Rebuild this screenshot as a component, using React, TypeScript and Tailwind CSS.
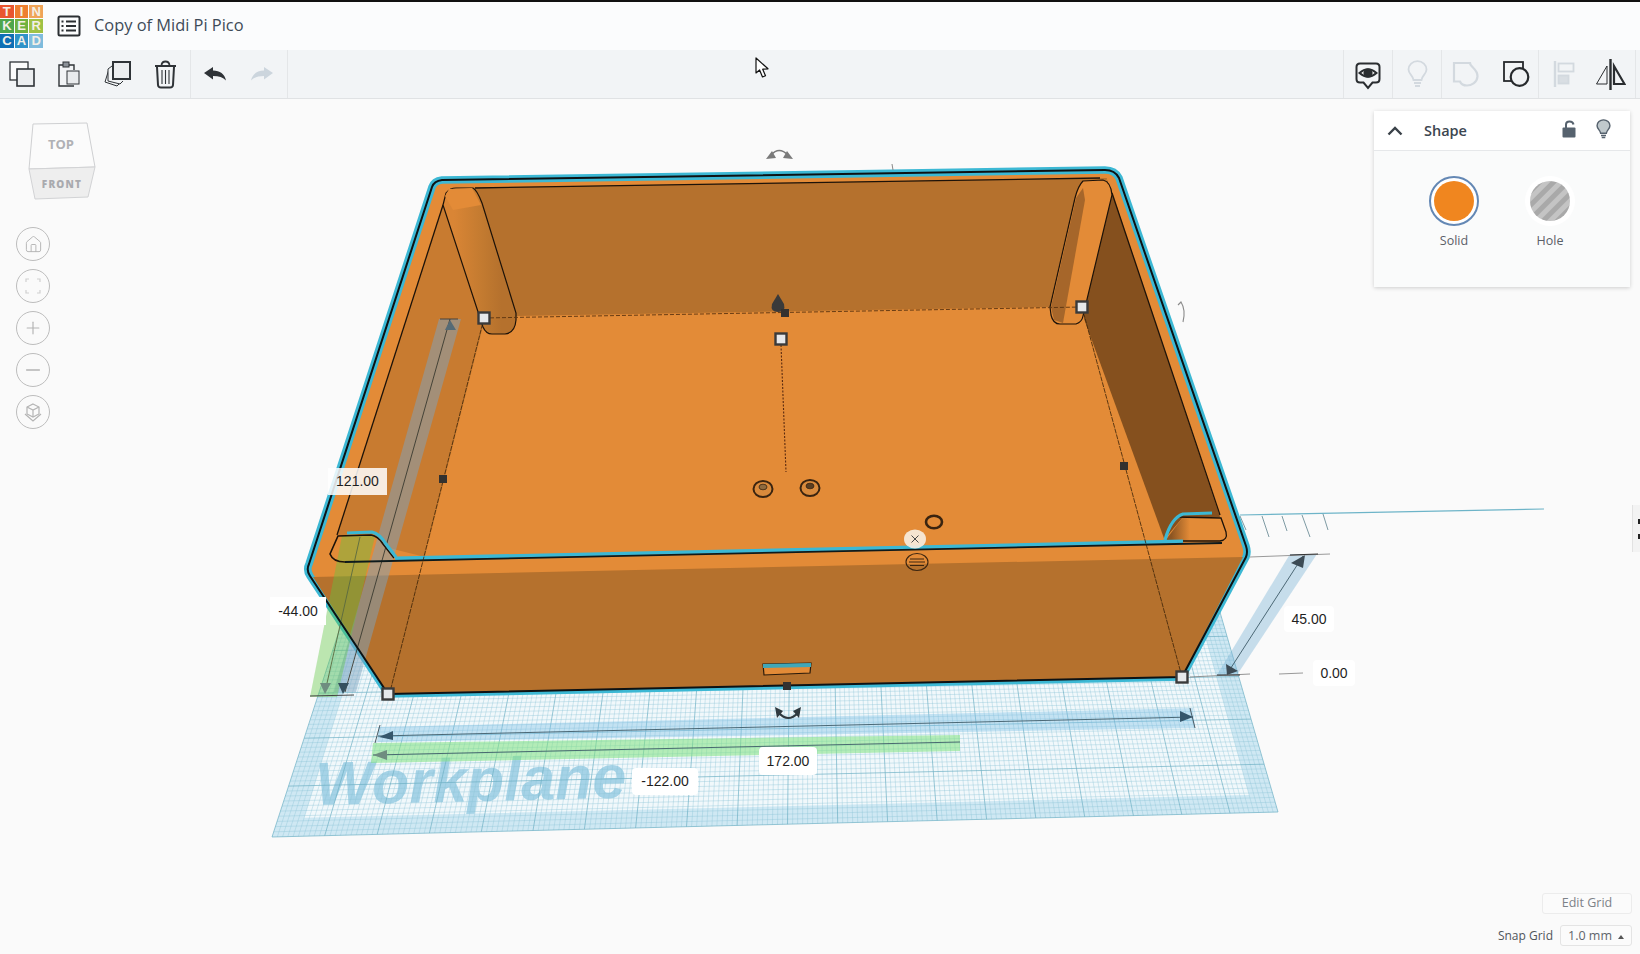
import { Home, Minus, Plus } from "lucide-react";

// workplane corners, bottom-left / bottom-right / top-right / top-left
const WP = { bl: [272, 837], br: [1278, 812], tr: [1186, 495], tl: [381, 502] };

function homography() {
  const [x0, y0] = WP.tl;
  const [x1, y1] = WP.tr;
  const [x2, y2] = WP.br;
  const [x3, y3] = WP.bl;
  const dx1 = x1 - x2, dx2 = x3 - x2, dx3 = x0 - x1 + x2 - x3;
  const dy1 = y1 - y2, dy2 = y3 - y2, dy3 = y0 - y1 + y2 - y3;
  const den = dx1 * dy2 - dx2 * dy1;
  const g = (dx3 * dy2 - dx2 * dy3) / den;
  const h = (dx1 * dy3 - dx3 * dy1) / den;
  const a = x1 - x0 + g * x1, b = x3 - x0 + h * x3, c = x0;
  const d = y1 - y0 + g * y1, e = y3 - y0 + h * y3, f = y0;
  return (u: number, v: number) => {
    const w = g * u + h * v + 1;
    return [(a * u + b * v + c) / w, (d * u + e * v + f) / w];
  };
}

const project = homography();
const pt = (u: number, v: number) => project(u, v).map((n) => n.toFixed(1)).join(",");

function gridPath(major: boolean) {
  let d = "";
  const cols = 200, rows = 80;
  for (let i = 0; i <= cols; i++) {
    const isMajor = i % 10 === 0;
    if (isMajor !== major) continue;
    d += `M${pt(i / cols, 0)}L${pt(i / cols, 1)}`;
  }
  for (let j = 0; j <= rows; j++) {
    const isMajor = j % 10 === 0;
    if (isMajor !== major) continue;
    d += `M${pt(0, j / rows)}L${pt(1, j / rows)}`;
  }
  return d;
}

const bandPath = `M${pt(0, 0)}L${pt(1, 0)}L${pt(1, 1)}L${pt(0, 1)}Z M${pt(0.025, 0)}L${pt(0.025, 0.955)}L${pt(0.975, 0.955)}L${pt(0.975, 0)}Z`;

const OUTLINE =
  "M442 180L1105 170Q1115 170 1119 178L1246 546Q1248 552 1246 557L1182 677L388 694L310 576Q306 570 309 564L432 187Q434 181 442 180Z";

function Handle({ x, y }: { x: number; y: number }) {
  return <rect x={x - 5.5} y={y - 5.5} width="11" height="11" fill="#e6e8ea" stroke="#3a3a3a" strokeWidth="2.4" />;
}

function Knob({ x, y }: { x: number; y: number }) {
  return <rect x={x - 4} y={y - 4} width="8" height="8" fill="#33312f" />;
}

function Scene() {
  return (
    <svg className="absolute inset-0" width="1640" height="855" viewBox="0 99 1640 855" fill="none">
      <defs>
        <linearGradient id="postL" x1="0" y1="0" x2="1" y2="0">
          <stop offset="0.15" stopColor="#d98535" />
          <stop offset="0.55" stopColor="#c27a30" />
          <stop offset="0.8" stopColor="#b5712d" />
        </linearGradient>
        <linearGradient id="postF" x1="0" y1="0" x2="1" y2="0">
          <stop offset="0.1" stopColor="#8c5522" />
          <stop offset="0.4" stopColor="#e38b37" />
        </linearGradient>
      </defs>

      {/* workplane */}
      <path d={`M${pt(0, 0)}L${pt(1, 0)}L${pt(1, 1)}L${pt(0, 1)}Z`} fill="#f1f8fb" />
      <path d={bandPath} fill="#cfe8f3" fillRule="evenodd" />
      <text
        x="0"
        y="0"
        transform="translate(316 805) rotate(-1.4)"
        fontFamily="'Liberation Sans', sans-serif"
        fontWeight="700"
        fontStyle="italic"
        fontSize="61"
        fill="#a6d3e7"
      >
        Workplane
      </text>
      <path d={gridPath(false)} stroke="#8cc3d6" strokeWidth="0.5" opacity="0.75" />
      <path d={gridPath(true)} stroke="#6fb0c4" strokeWidth="0.7" />

      {/* ruler on the right */}
      <path d="M1240 515L1544 509" stroke="#6db4c8" strokeWidth="1.2" />
      <path d="M1240 516L1246 530M1262 516L1269 537M1282 516L1287 531M1302 515L1310 537M1323 514L1328 530" stroke="#6f8f99" strokeWidth="0.9" />

      {/* measure bars under the box */}
      <polygon points="378,727 1193,708 1195,728 378,742" fill="#79bde6" fillOpacity="0.38" />
      <polygon points="373,743 960,735 960,751 371,763" fill="#7fe27f" fillOpacity="0.55" />
      <polygon points="1217,675 1237,675 1317,554 1290,554" fill="#7fb5d6" fillOpacity="0.42" />
      <path d="M378 736L1193 717M373 755L960 742" stroke="#3d5a68" strokeWidth="0.9" />
      <path d="M380 725L375 743M1190 708L1195 728" stroke="#3b4a52" strokeWidth="0.9" />
      <polygon points="379,737 393,731 393,740" fill="#35566b" />
      <polygon points="373,755 387,750 387,760" fill="#6f8d80" />
      <polygon points="1193,717 1180,711 1180,722" fill="#35566b" />
      <path d="M1227 674L1303 556" stroke="#3d5a68" strokeWidth="0.9" />
      <polygon points="1305,555 1291,563 1303,568" fill="#3c4b55" />
      <polygon points="1227,675 1226,664 1238,671" fill="#3c4b55" />
      <path d="M1250 557L1330 554" stroke="#999" strokeWidth="1" />
      <path d="M1290 555L1318 554" stroke="#333" strokeWidth="1" />
      <path d="M1190 677L1250 674" stroke="#888" strokeWidth="0.9" />
      <path d="M1217 675L1240 675" stroke="#333" strokeWidth="1" />
      <path d="M1279 674L1303 673" stroke="#999" strokeWidth="1" />

      {/* box body */}
      <path d={OUTLINE} fill="#e38b37" stroke="#3cb8d4" strokeWidth="7.5" strokeLinejoin="round" />
      {/* front wall */}
      <polygon points="313,577 1243,557 1182,677 388,694" fill="#b5712d" />

      {/* inner walls and floor */}
      <polygon points="450,188 1107,178 1082,322 480,327" fill="#b5712d" />
      <polygon points="443,205 483,327 425,557 337,535" fill="#c87b30" />
      <polygon points="1107,180 1112,192 1220,517 1183,517 1163,541 1083,322" fill="#85501e" />
      <polygon points="517,316 1050,307 1083,316 1165,541 425,557 483,327" fill="#e38b37" />

      {/* lines of the rim */}
      <path d="M475 188L1100 178" stroke="#1c1209" strokeWidth="1.3" />
      <path d="M443 205L337 535" stroke="#1c1209" strokeWidth="1.3" />
      <path d="M1112 193L1220 515" stroke="#1c1209" strokeWidth="1.3" />

      {/* back corner posts */}
      <path
        d="M443 205L446 193Q450 188 456 188L473 188Q477 190 482 203L516 313L516 320Q515 333 505 334L492 334Q486 334 483 327Z"
        fill="url(#postL)"
        stroke="#1c1209"
        strokeWidth="1.2"
      />
      <polygon points="445,196 449,189 472,188 481,205 453,210" fill="#e38b37" />
      <path
        d="M1083 181Q1078 186 1075 198L1050 307L1051 315Q1053 324 1060 324L1076 324Q1082 322 1083 316L1112 195Q1111 182 1103 180Z"
        fill="#e38b37"
        stroke="#1c1209"
        strokeWidth="1.2"
      />
      <polygon points="1076,198 1083,188 1085,200 1063,323 1054,320 1051,307" fill="#a6662a" />

      {/* front corner posts */}
      <path d="M338 535L373 535Q380 536 385 543L395 558L345 561Q332 561 330 553Z" fill="#e38b37" />
      <polygon points="1183,517 1220,517 1227,538 1222,542 1165,541" fill="url(#postF)" />
      <path d="M1166 541L1220 541Q1228 540 1226 532L1221 518L1176 517" stroke="#1c1209" strokeWidth="1.3" />

      {/* translucent bars across the wall */}
      <polygon points="439,319 461,319 356,692 334,692" fill="#7da3c0" fillOpacity="0.5" />
      <polygon points="342,536 375,536 337,697 310,697" fill="#60c840" fillOpacity="0.4" />
      <path d="M450 319L345 692" stroke="#3a3a30" strokeWidth="0.9" />
      <path d="M360 537L325 692" stroke="#5a6a40" strokeWidth="0.9" />
      <path d="M440 319L458 319" stroke="#3a3a3a" strokeWidth="0.9" />
      <path d="M310 696L354 695" stroke="#444" strokeWidth="1" />
      <polygon points="450,320 445,330 456,330" fill="#556a75" />
      <polygon points="343,694 338,683 349,683" fill="#35505e" />
      <polygon points="325,694 320,683 331,683" fill="#6f8d80" />

      {/* rim line, cyan over black */}
      <path d="M395 558.5L1183 541.5" stroke="#3cb8d4" strokeWidth="3.8" />
      <path d="M345 562L1222 543" stroke="#0e1a1c" strokeWidth="1.8" />
      <path d="M345 562Q333 562 330 554L338 536L371 535Q378 536 383 544L394 558" stroke="#1c1209" strokeWidth="1.6" />
      <path d="M347 533L372 532Q380 534 386 544L396 557" stroke="#3cb8d4" strokeWidth="3.2" />
      <path d="M1165 540Q1171 518 1183 514L1212 513" stroke="#3cb8d4" strokeWidth="3.2" />

      {/* outer black outline */}
      <path d={OUTLINE} stroke="#0d1214" strokeWidth="2" strokeLinejoin="round" />

      {/* dashed selection lines */}
      <path d="M484 318L1082 307" stroke="#5a3310" strokeWidth="0.9" strokeDasharray="4 2" />
      <path d="M484 318L390 692" stroke="#3a2208" strokeWidth="0.8" strokeDasharray="5 1" />
      <path d="M1082 307L1182 677" stroke="#3a2208" strokeWidth="0.8" strokeDasharray="5 1" />
      <path d="M781 345L786 472" stroke="#5a2a10" strokeWidth="1.1" strokeDasharray="2 1.5" />

      {/* slot in the front wall */}
      <polygon points="763,664 811,663 810,673 764,675" fill="#e38b37" stroke="#2a1a0a" strokeWidth="1.2" />
      <polygon points="763,664 811,663 811,667 763,668" fill="#3fa7b8" />

      {/* small parts on the floor */}
      <g stroke="#3a2410" strokeWidth="2">
        <ellipse cx="763" cy="489" rx="9.5" ry="8" fill="#d98a3c" />
        <ellipse cx="763" cy="487" rx="4" ry="2.8" fill="#8f6a3e" strokeWidth="0.8" />
        <ellipse cx="810" cy="488" rx="9.5" ry="8" fill="#d98a3c" />
        <ellipse cx="810" cy="486" rx="4" ry="2.8" fill="#5a3e22" strokeWidth="0.8" />
        <ellipse cx="934" cy="522" rx="8" ry="6.3" strokeWidth="2.6" />
        <ellipse cx="917" cy="562" rx="11" ry="8.5" strokeWidth="1.1" />
        <path d="M910 559H924M909 562H925M910 565.5H924" strokeWidth="1" />
      </g>
      <ellipse cx="915" cy="539" rx="11" ry="9.5" fill="#f7eee2" fillOpacity="0.9" />
      <path d="M911.5 535.5L918.5 542.5M918.5 535.5L911.5 542.5" stroke="#4a4a4a" strokeWidth="1" />

      {/* height cone */}
      <path d="M778 294L784 304Q786 312 778 312Q770 312 772 304Z" fill="#3a3a3a" />

      {/* rotation arrows */}
      <path d="M771 155Q779 146 788 155" stroke="#7a7a7a" strokeWidth="1.6" />
      <polygon points="766,159 772,151 776,158" fill="#7a7a7a" />
      <polygon points="793,159 787,151 783,158" fill="#7a7a7a" />
      <path d="M892 164L893 170" stroke="#888" strokeWidth="1" />
      <path d="M1178 305L1181 302Q1186 310 1183 322" stroke="#8a8a8a" strokeWidth="1.1" />
      <path d="M779 713Q788 723 798 713" stroke="#2f3a40" strokeWidth="2.2" />
      <polygon points="775,707 783,711 777,718" fill="#2f3a40" />
      <polygon points="801,707 793,711 799,718" fill="#2f3a40" />

      {/* handles */}
      <Handle x={388} y={694} />
      <Handle x={1182} y={677} />
      <Handle x={484} y={318} />
      <Handle x={1082} y={307} />
      <Handle x={781} y={339} />
      <Knob x={785} y={313} />
      <Knob x={443} y={479} />
      <Knob x={1124} y={466} />
      <Knob x={787} y={686} />

      {/* view cube */}
      <polygon points="33,124 87,123 95,167 29,169" fill="#fbfbfb" stroke="#cfd0d2" strokeWidth="1" />
      <polygon points="29,169 95,167 88,197 35,199" fill="#eeeeee" stroke="#d2d3d5" strokeWidth="1" />
      <text x="61" y="149" textAnchor="middle" fontFamily="'Open Sans', sans-serif" fontWeight="700" fontSize="13" fill="#b0b1b5">
        TOP
      </text>
      <text x="62" y="188" textAnchor="middle" fontFamily="'Open Sans', sans-serif" fontWeight="800" fontSize="10" letterSpacing="1.2" fill="#a9aaae">
        FRONT
      </text>
    </svg>
  );
}

function Logo() {
  const cells = [
    ["T", "bg-[#e9552f]"],
    ["I", "bg-[#ee7f2f]"],
    ["N", "bg-[#f0a458]"],
    ["K", "bg-[#4ea64c]"],
    ["E", "bg-[#6fb23f]"],
    ["R", "bg-[#a0c244]"],
    ["C", "bg-[#0f6fb5]"],
    ["A", "bg-[#2f93c9]"],
    ["D", "bg-[#7fbcdd]"],
  ];
  return (
    <div className="grid h-[43px] w-[43px] grid-cols-3 grid-rows-3 gap-px">
      {cells.map(([letter, bg]) => (
        <div
          key={letter}
          className={`${bg} flex items-center justify-center text-[13px] font-bold text-[#f3efe6] font-['Liberation_Sans',sans-serif]`}
        >
          {letter}
        </div>
      ))}
    </div>
  );
}

function ListIcon() {
  return (
    <svg width="24" height="22" viewBox="0 0 24 22" fill="none" stroke="#2b2f33" strokeWidth="2">
      <rect x="1.5" y="1.5" width="21" height="19" rx="1.5" />
      <path d="M9 6.5H19M9 11H19M9 15.5H19" />
      <path d="M4.5 6.5H6.5M4.5 11H6.5M4.5 15.5H6.5" />
    </svg>
  );
}

const S = "#2f3337";
const L = "#f2f4f6";

function CopyIcon() {
  return (
    <svg width="26" height="26" viewBox="0 0 26 26" fill="none" stroke={S} strokeWidth="1.3">
      <rect x="1" y="1" width="18" height="18" fill="#fbfbfb" />
      <rect x="8" y="8" width="17" height="17" fill="#eceef0" strokeWidth="1.6" />
    </svg>
  );
}

function PasteIcon() {
  return (
    <svg width="24" height="26" viewBox="0 0 24 26" fill="none" stroke={S} strokeWidth="1.4">
      <path d="M7 4H2V25H17" />
      <path d="M12 4H17V9" />
      <rect x="6" y="1" width="6" height="5" fill="#8b9198" strokeWidth="1" />
      <rect x="10" y="10" width="12" height="13" fill="#e9ebed" strokeWidth="1" />
    </svg>
  );
}

function DuplicateIcon() {
  return (
    <svg width="28" height="28" viewBox="0 0 28 28" fill="none" stroke={S}>
      <path d="M5 9L1 22L13 26L17 22" strokeWidth="1" />
      <path d="M8 6L4 9V21L16 24L19 21" strokeWidth="1" fill={L} />
      <rect x="9" y="2" width="17" height="17" fill="#eceef0" strokeWidth="2" />
    </svg>
  );
}

function TrashIcon() {
  return (
    <svg width="23" height="29" viewBox="0 0 23 29" fill="none" stroke={S} strokeWidth="1.8">
      <path d="M1 6H22" strokeWidth="2" />
      <path d="M7.5 5Q8 1.5 11.5 1.5Q15 1.5 15.5 5" />
      <path d="M3 7L4 25Q4.2 27.5 7 27.5H16Q18.8 27.5 19 25L20 7" strokeWidth="2" fill={L} />
      <path d="M8 10V24M11.5 10V24M15 10V24" strokeWidth="1.1" />
    </svg>
  );
}

function UndoIcon({ flip, color }: { flip?: boolean; color: string }) {
  return (
    <svg width="22" height="14" viewBox="0 0 22 14" fill={color} className={flip ? "-scale-x-100" : ""}>
      <path d="M0 6L9 0V3.6C16 3.6 20.5 7 22 13.5C19 10.4 15 9 9 9V12.5Z" />
    </svg>
  );
}

function EyeBubble() {
  return (
    <svg width="26" height="28" viewBox="0 0 26 28" fill="none" stroke="#2a2d30" strokeWidth="2" className="mt-[3px]">
      <path d="M5 1.5H21Q24.5 1.5 24.5 5V17Q24.5 20.5 21 20.5H17.5L13 26L8.5 20.5H5Q1.5 20.5 1.5 17V5Q1.5 1.5 5 1.5Z" />
      <path d="M4.5 11Q13 3.5 21.5 11Q13 18.5 4.5 11Z" fill="#fafafa" />
      <circle cx="13" cy="11" r="3.6" fill="#2a2d30" />
    </svg>
  );
}

function BulbIcon({ color, fill, size }: { color: string; fill: string; size: number }) {
  return (
    <svg width={size * 0.75} height={size} viewBox="0 0 21 28" fill={fill} stroke={color} strokeWidth="1.8">
      <path d="M6.5 20C6 15.5 1.5 14 1.5 9.5C1.5 4.8 5.5 1.2 10.5 1.2C15.5 1.2 19.5 4.8 19.5 9.5C19.5 14 15 15.5 14.5 20Z" />
      <path d="M7 23H14M8 26H13" fill="none" />
    </svg>
  );
}

function GroupIcon() {
  return (
    <svg width="27" height="26" viewBox="0 0 27 26" fill="none" stroke="#d3d9df" strokeWidth="2.2">
      <path d="M2 2H18C18 6 26 8 25.5 15.5C25 22 19 24.5 15 24.5C12 24.5 9 23 8 20.5H2Z" />
    </svg>
  );
}

function SolidGroupIcon() {
  return (
    <svg width="27" height="26" viewBox="0 0 27 26" fill="none" stroke="#26292c">
      <rect x="1" y="1" width="19" height="19" strokeWidth="1.8" />
      <circle cx="16.5" cy="16" r="8.8" fill="#f0f2f4" strokeWidth="2.2" />
    </svg>
  );
}

function AlignIcon() {
  return (
    <svg width="22" height="26" viewBox="0 0 22 26" fill="none" stroke="#d3d9df" strokeWidth="1.8">
      <path d="M2 0V26" strokeWidth="2.4" />
      <rect x="5.5" y="2.5" width="15" height="8" />
      <rect x="5.5" y="14.5" width="10" height="8" fill="#d9dee3" />
    </svg>
  );
}

function MirrorIcon() {
  return (
    <svg width="31" height="31" viewBox="0 0 31 31" fill="none" stroke="#2a2d30">
      <path d="M15.5 0V31" strokeWidth="2.4" />
      <path d="M12 7V25H1.5Z" strokeWidth="1" />
      <path d="M19 7V25H29.5Z" strokeWidth="2.2" />
    </svg>
  );
}

function Toolbar() {
  return (
    <div className="flex h-[49px] shrink-0 items-stretch justify-between border-b border-[#e0e2e4] bg-[#f2f4f6]">
      <div className="flex">
        <div className="flex w-[191px] items-center border-r border-[#e4e6e8]">
          <div className="flex w-[44px] justify-center">
            <CopyIcon />
          </div>
          <div className="flex w-[50px] justify-center">
            <PasteIcon />
          </div>
          <div className="flex w-[48px] justify-center">
            <DuplicateIcon />
          </div>
          <div className="flex w-[47px] justify-center">
            <TrashIcon />
          </div>
        </div>
        <div className="flex w-[97px] items-center border-r border-[#e4e6e8]">
          <div className="flex w-[47px] justify-center">
            <UndoIcon color="#2f3337" />
          </div>
          <div className="flex w-[47px] justify-center">
            <UndoIcon flip color="#ccd5dd" />
          </div>
        </div>
      </div>
      <div className="flex pr-1">
        <div className="flex w-[49px] items-center justify-center border-l border-[#e4e6e8]">
          <EyeBubble />
        </div>
        <div className="flex w-[49px] items-center justify-center border-l border-[#e4e6e8]">
          <BulbIcon color="#d3d9df" fill="none" size={28} />
        </div>
        <div className="flex w-[97px] items-center justify-between border-l border-[#e4e6e8] pl-[10px] pr-[8px]">
          <GroupIcon />
          <SolidGroupIcon />
        </div>
        <div className="flex w-[98px] items-center justify-between border-x border-[#e4e6e8] pl-[14px] pr-[9px]">
          <AlignIcon />
          <MirrorIcon />
        </div>
      </div>
    </div>
  );
}

function ShapePanel() {
  return (
    <div className="absolute right-[10px] top-[12px] h-[176px] w-[256px] bg-[#fafbfb] shadow-[0_1px_4px_rgba(0,0,0,0.18)]">
      <div className="flex h-[40px] items-center border-b border-[#e6e8ea] bg-white pl-[13px] pr-[19px]">
        <svg width="16" height="10" viewBox="0 0 16 10" fill="none" stroke="#3a4148" strokeWidth="2.4">
          <path d="M1.5 8.5L8 2L14.5 8.5" />
        </svg>
        <span className="ml-[21px] flex-1 text-[14.5px] font-semibold text-[#3c4650]">Shape</span>
        <svg width="14" height="18" viewBox="0 0 14 18" className="mb-[3px] mr-[20px]">
          <path d="M4 8V4.5Q4 1.5 7.5 1.5Q11 1.5 11.5 4.5" fill="none" stroke="#56626e" strokeWidth="2" />
          <rect x="0.5" y="7.5" width="13" height="10" rx="1" fill="#56626e" />
        </svg>
        <svg width="15" height="20" viewBox="0 0 21 28" fill="#bfc8cc" stroke="#56626e" strokeWidth="2" className="mb-[3px]">
          <path d="M6.5 20C6 15.5 1.5 14 1.5 9.5C1.5 4.8 5.5 1.2 10.5 1.2C15.5 1.2 19.5 4.8 19.5 9.5C19.5 14 15 15.5 14.5 20Z" />
          <path d="M7 23H14M8 26H13" fill="none" />
        </svg>
      </div>
      <div className="flex pl-[55px] pt-[25px]">
        <div className="flex w-[50px] flex-col items-center">
          <div className="flex h-[50px] w-[50px] items-center justify-center rounded-full border-2 border-[#6488b4] bg-white">
            <div className="h-[40px] w-[40px] rounded-full bg-[#f0861f]" />
          </div>
          <span className="mt-[6px] text-[12.5px] text-[#5a6068]">Solid</span>
        </div>
        <div className="ml-[46px] flex w-[50px] flex-col items-center">
          <div className="flex h-[50px] w-[50px] items-center justify-center rounded-full bg-white">
            <svg width="40" height="40" viewBox="0 0 40 40">
              <defs>
                <pattern id="stripes" width="10" height="10" patternUnits="userSpaceOnUse" patternTransform="rotate(-45)">
                  <rect width="10" height="10" fill="#a9a9a9" />
                  <rect width="10" height="5" fill="#c4c4c4" />
                </pattern>
              </defs>
              <circle cx="20" cy="20" r="20" fill="url(#stripes)" />
            </svg>
          </div>
          <span className="mt-[6px] text-[12.5px] text-[#5a6068]">Hole</span>
        </div>
      </div>
    </div>
  );
}

function Box3dIcon() {
  return (
    <svg width="20" height="20" viewBox="0 0 20 20" fill="none" stroke="#b4b4b4" strokeWidth="1.2">
      <path d="M10 2L16 5V12L10 15L4 12V5Z" />
      <path d="M4 5L10 8L16 5M10 8V15" />
      <path d="M2 12L10 19L18 12" />
    </svg>
  );
}

function FitIcon() {
  return (
    <svg width="16" height="16" viewBox="0 0 16 16" fill="none" stroke="#d0d0d0" strokeWidth="1.2">
      <path d="M1 4V1H4M12 1H15V4M15 12V15H12M4 15H1V12" />
    </svg>
  );
}

function RoundButton({ children }: { children: React.ReactNode }) {
  return (
    <div className="flex h-[34px] w-[34px] items-center justify-center rounded-full border border-[#bdbdbd] bg-[#fafafa]">
      {children}
    </div>
  );
}

function Label({ className, children }: { className: string; children: React.ReactNode }) {
  return (
    <div className={`absolute flex items-center justify-center font-['Liberation_Sans',sans-serif] text-[14px] text-[#1f1f1f] ${className}`}>
      {children}
    </div>
  );
}

export default function App() {
  return (
    <div className="flex h-[954px] w-[1640px] flex-col overflow-hidden bg-[#fafafa] font-['Open_Sans',sans-serif]">
      <div className="h-[2px] shrink-0 bg-[#111]" />
      <div className="flex h-[48px] shrink-0 items-center bg-[#fbfcfd] shadow-[0_1px_2px_rgba(0,0,0,0.08)]">
        <Logo />
        <div className="ml-[14px]">
          <ListIcon />
        </div>
        <span className="-mt-px ml-[13px] text-[16.4px] font-medium text-[#3e4b58]">Copy of Midi Pi Pico</span>
      </div>
      <Toolbar />

      <div className="relative flex-1">
        <Scene />

        <div className="absolute left-[16px] top-[128px] flex flex-col gap-2">
          <RoundButton>
            <Home size={19} strokeWidth={1.2} color="#b4b4b4" />
          </RoundButton>
          <RoundButton>
            <FitIcon />
          </RoundButton>
          <RoundButton>
            <Plus size={20} strokeWidth={1.4} color="#b4b4b4" />
          </RoundButton>
          <RoundButton>
            <Minus size={22} strokeWidth={1.4} color="#b4b4b4" />
          </RoundButton>
          <RoundButton>
            <Box3dIcon />
          </RoundButton>
        </div>

        <ShapePanel />

        <Label className="left-[328px] top-[369px] h-[27px] w-[59px] bg-white/85">121.00</Label>
        <Label className="left-[270px] top-[498px] h-[28px] w-[56px] bg-white">-44.00</Label>
        <Label className="left-[632px] top-[669px] h-[27px] w-[66px] rounded-sm bg-white">-122.00</Label>
        <Label className="left-[759px] top-[648px] h-[28px] w-[58px] rounded-sm bg-white">172.00</Label>
        <Label className="left-[1284px] top-[507px] h-[26px] w-[50px] rounded-sm bg-white">45.00</Label>
        <Label className="left-[1313px] top-[561px] h-[26px] w-[42px] rounded-sm bg-white">0.00</Label>

        {/* tab cut off by the right edge */}
        <div className="absolute right-0 top-[406px] flex h-[47px] w-[8px] flex-col justify-center gap-[10px] border-l border-[#e2e2e2] bg-[#f3f3f3] pl-[5px]">
          <div className="h-[5px] w-[3px] bg-[#222]" />
          <div className="h-[5px] w-[3px] bg-[#222]" />
        </div>

        <div className="absolute right-[8px] top-[794px] flex h-[21px] w-[90px] items-center justify-center rounded-[3px] border border-[#ececec] bg-[#fbfbfb] text-[12.5px] text-[#7d8288]">
          Edit Grid
        </div>
        <div className="absolute right-[8px] top-[826px] flex items-center gap-[7px] text-[12px]">
          <span className="text-[#4f555b]">Snap Grid</span>
          <div className="flex h-[21px] w-[72px] items-center justify-center gap-[6px] rounded-[3px] border border-[#e4e4e4] bg-[#fbfbfb] pt-[2px] text-[12.5px] text-[#5f656b]">
            <span>1.0 mm</span>
            <span className="h-0 w-0 border-x-[3px] border-b-[4px] border-x-transparent border-b-[#555]" />
          </div>
        </div>
      </div>

      {/* mouse pointer */}
      <svg className="absolute left-[755px] top-[57px]" width="15" height="22" viewBox="0 0 15 22">
        <path d="M1 1V16L4.6 13L7.5 20L10.5 18.8L7.7 12.2L13 11.8Z" fill="#fff" stroke="#111" strokeWidth="1.2" strokeLinejoin="round" />
      </svg>
    </div>
  );
}
